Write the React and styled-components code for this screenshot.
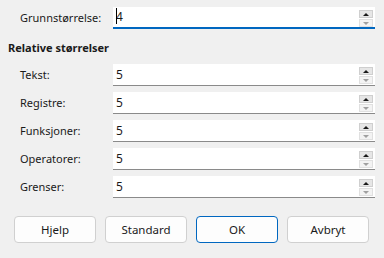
import React from "react"
import styled, { createGlobalStyle } from "styled-components"

const GlobalStyle = createGlobalStyle`
  html, body {
    margin: 0;
    padding: 0;
    background: #f0f0f0;
  }
  body {
    font-family: "Noto Sans", "Segoe UI", sans-serif;
    font-size: 11px;
    color: #1a1a1a;
  }
`

const Dialog = styled.div`
  width: 384px;
  height: 258px;
  padding: 7px 0 0 0;
  box-sizing: border-box;
  display: flex;
  flex-direction: column;
`

const Row = styled.div`
  display: grid;
  grid-template-columns: 93px 262px;
  padding-left: 20px;
  align-items: center;
  height: 22px;
`

const Rows = styled.div`
  display: flex;
  flex-direction: column;
  gap: 6px;
`

const Label = styled.label`
  line-height: 16px;
  white-space: nowrap;
`

const Heading = styled.div`
  font-weight: 700;
  margin: 11px 0 8px 8px;
  line-height: 16px;
`

const Field = styled.div`
  position: relative;
  height: 22px;
  box-sizing: border-box;
  background: #ffffff;
  border-bottom: ${p => (p.$focused ? "2px solid #0067c0" : "1px solid #8a8a8a")};
  display: flex;
  align-items: center;
  padding-left: 3px;
  font-size: 12px;
`

const Value = styled.span`
  line-height: 16px;
  position: relative;
`

const Caret = styled.span`
  position: absolute;
  left: 0;
  top: -1px;
  width: 1px;
  height: 16px;
  background: #000;
`

const Spin = styled.div`
  position: absolute;
  right: 2px;
  top: 3px;
  width: 14px;
  display: flex;
  flex-direction: column;
  gap: 1px;
`

const SpinButton = styled.div`
  height: 8px;
  box-sizing: border-box;
  background: ${p => (p.$disabled ? "#f3f3f3" : "#e6e6e6")};
  border: 1px solid ${p => (p.$disabled ? "#e0e0e0" : "#cfcfcf")};
  display: flex;
  align-items: center;
  justify-content: center;
`

const Arrow = styled.span`
  width: 0;
  height: 0;
  border-left: 3px solid transparent;
  border-right: 3px solid transparent;
  ${p =>
    p.$down
      ? `border-top: 3px solid #a0a0a0;`
      : `border-bottom: 3px solid #1a1a1a;`}
`

const Buttons = styled.div`
  display: flex;
  gap: 9px;
  padding-left: 14px;
  margin-top: 18px;
`

const Button = styled.button`
  width: 82px;
  height: 27px;
  box-sizing: border-box;
  background: #fdfdfd;
  border: 1px solid ${p => (p.$primary ? "#0067c0" : "#d0d0d0")};
  border-radius: 4px;
  font-family: inherit;
  font-size: 11.5px;
  color: #1a1a1a;
  padding: 0;
`

const SpinField = ({ value, focused }) => (
  <Field $focused={focused}>
    <Value>
      {focused && <Caret />}
      {value}
    </Value>
    <Spin>
      <SpinButton>
        <Arrow />
      </SpinButton>
      <SpinButton $disabled>
        <Arrow $down />
      </SpinButton>
    </Spin>
  </Field>
)

const sizes = ["Tekst:", "Registre:", "Funksjoner:", "Operatorer:", "Grenser:"]

const App = () => (
  <Dialog>
    <GlobalStyle />
    <Row>
      <Label>Grunnstørrelse:</Label>
      <SpinField value="4" focused />
    </Row>
    <Heading>Relative størrelser</Heading>
    <Rows>
      {sizes.map(label => (
        <Row key={label}>
          <Label>{label}</Label>
          <SpinField value="5" />
        </Row>
      ))}
    </Rows>
    <Buttons>
      <Button>Hjelp</Button>
      <Button>Standard</Button>
      <Button $primary>OK</Button>
      <Button>Avbryt</Button>
    </Buttons>
  </Dialog>
)

export default App
